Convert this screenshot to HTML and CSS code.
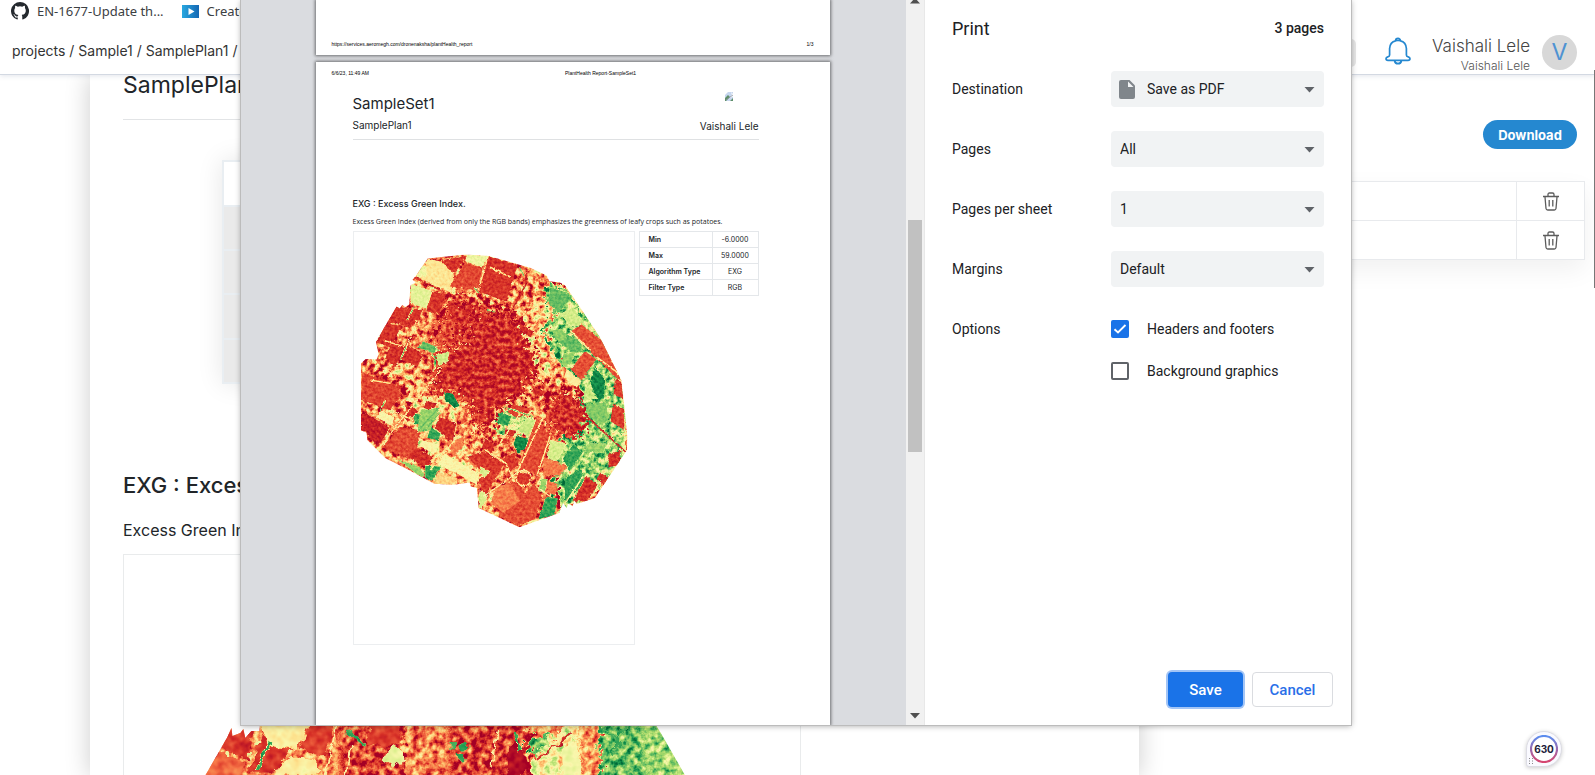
FILE: index.html
```html
<!DOCTYPE html>
<html lang="en">
<head>
<meta charset="utf-8">
<title>PlantHealth Report-SampleSet1</title>
<link rel="stylesheet" href="styles.css">
</head>
<body>
<svg class="defs" width="0" height="0" aria-hidden="true">
  <defs>
    <filter id="mixed" x="0" y="0" width="1" height="1" color-interpolation-filters="sRGB">
      <feTurbulence type="fractalNoise" baseFrequency="0.06" numOctaves="4" seed="4" result="t"/>
      <feColorMatrix in="t" values="1 0 0 0 0 1 0 0 0 0 1 0 0 0 0 0 0 0 0 1" result="n"/>
      <feDisplacementMap in="SourceGraphic" in2="t" scale="60" xChannelSelector="R" yChannelSelector="G" result="d"/>
      <feComposite in="d" in2="n" operator="arithmetic" k2="1" k3="1.15" k4="-0.575"/>
      <feComponentTransfer>
        <feFuncR type="table" tableValues=".647 .843 .957 .992 .996 .98 .851 .651 .4 .102 0"/>
        <feFuncG type="table" tableValues="0 .188 .427 .682 .878 .97 .937 .851 .741 .596 .408"/>
        <feFuncB type="table" tableValues=".149 .153 .263 .38 .545 .68 .545 .416 .388 .314 .216"/>
        <feFuncA type="linear" slope="0" intercept="1"/>
      </feComponentTransfer>
    </filter>
    <filter id="mixed-fine" x="0" y="0" width="1" height="1" color-interpolation-filters="sRGB">
      <feTurbulence type="fractalNoise" baseFrequency="0.15" numOctaves="3" seed="9" result="t"/>
      <feColorMatrix in="t" values="1 0 0 0 0 1 0 0 0 0 1 0 0 0 0 0 0 0 0 1" result="n"/>
      <feDisplacementMap in="SourceGraphic" in2="t" scale="24" xChannelSelector="R" yChannelSelector="G" result="d"/>
      <feComposite in="d" in2="n" operator="arithmetic" k2="1" k3="0.8" k4="-0.4"/>
      <feComponentTransfer>
        <feFuncR type="table" tableValues=".647 .843 .957 .992 .996 .98 .851 .651 .4 .102 0"/>
        <feFuncG type="table" tableValues="0 .188 .427 .682 .878 .97 .937 .851 .741 .596 .408"/>
        <feFuncB type="table" tableValues=".149 .153 .263 .38 .545 .68 .545 .416 .388 .314 .216"/>
        <feFuncA type="linear" slope="0" intercept="1"/>
      </feComponentTransfer>
    </filter>
    <filter id="town" x="0" y="0" width="1" height="1" color-interpolation-filters="sRGB">
      <feTurbulence type="fractalNoise" baseFrequency="0.08" numOctaves="3" seed="11" result="t"/>
      <feColorMatrix in="t" values="1 0 0 0 0 1 0 0 0 0 1 0 0 0 0 0 0 0 0 1" result="n"/>
      <feDisplacementMap in="SourceGraphic" in2="t" scale="110" xChannelSelector="R" yChannelSelector="G" result="d"/>
      <feComposite in="d" in2="n" operator="arithmetic" k2="1" k3="0.5" k4="-0.265"/>
      <feComponentTransfer>
        <feFuncR type="table" tableValues=".68 .843 .957 .992 .996 .98 .851 .651 .4 .102 0"/>
        <feFuncG type="table" tableValues=".03 .188 .427 .682 .878 .97 .937 .851 .741 .596 .408"/>
        <feFuncB type="table" tableValues=".149 .153 .263 .38 .545 .68 .545 .416 .388 .314 .216"/>
      </feComponentTransfer>
      <feComposite in2="d" operator="in"/>
    </filter>
    <filter id="field" x="0" y="0" width="1" height="1" color-interpolation-filters="sRGB">
      <feTurbulence type="fractalNoise" baseFrequency="0.12" numOctaves="2" seed="7" result="t"/>
      <feColorMatrix in="t" values="1 0 0 0 0 1 0 0 0 0 1 0 0 0 0 0 0 0 0 1" result="n"/>
      <feDisplacementMap in="SourceGraphic" in2="t" scale="9" xChannelSelector="R" yChannelSelector="G" result="d"/>
      <feComposite in="d" in2="n" operator="arithmetic" k2="1" k3="0.2" k4="-0.1"/>
      <feComponentTransfer>
        <feFuncR type="table" tableValues=".647 .843 .957 .992 .996 .98 .851 .651 .4 .102 0"/>
        <feFuncG type="table" tableValues="0 .188 .427 .682 .878 .97 .937 .851 .741 .596 .408"/>
        <feFuncB type="table" tableValues=".149 .153 .263 .38 .545 .68 .545 .416 .388 .314 .216"/>
      </feComponentTransfer>
      <feComposite in2="d" operator="in"/>
    </filter>
    <clipPath id="outline"><path d="M232 84 345 72 415 76 540 112 590 135 598 152 630 156 645 164 700 245 750 320 815 450 823 520 833 620 832 660 735 805 690 820 680 822 674 812 668 830 655 822 650 835 640 820 632 838 628 850 508 893 385 835 380 775 362 770 358 758 310 765 252 762 165 715 105 685 50 630 48 608 31 602 31 400 45 386 78 388 84 372 76 335 138 228 148 234 155 224 165 230 176 222 180 165 196 155 186 148 195 138Z"/></clipPath>
    <clipPath id="outline-large"><path d="M204 777 227 737 231 728 232 736 240 733 243 729 245 738 251 731 259 731 260 722 656 722 664 735 688 777Z"/></clipPath>
    <linearGradient id="ring" x1="0" y1="0" x2="0" y2="1"><stop offset="0" stop-color="#5b8def"/><stop offset="1" stop-color="#d6456f"/></linearGradient>
    <linearGradient id="clip-blue"><stop offset="0" stop-color="#29a8e0"/><stop offset="1" stop-color="#1467b3"/></linearGradient>
    <symbol id="trash" viewBox="0 0 16 19"><path d="M0 4.500h16M5 4.500V2.500q0-1.500 1.500-1.500h3q1.500 0 1.500 1.500v2M2 5l1 11.500q.2 1.500 1.700 1.500h6.600q1.500 0 1.700-1.500L14 5M6.200 8v6.500M9.800 8v6.500" fill="none" stroke="#5c5c5c" stroke-width="1.300"/></symbol>
    <symbol id="caret" viewBox="0 0 10 6"><path d="M0 0h10L5 5.500z" fill="#5f6368"/></symbol>
  </defs>
</svg>

<header class="top">
  <nav class="bookmarks" aria-label="Bookmarks">
    <a href="#"><svg width="18" height="18" viewBox="0 0 16 16"><path fill="#24292e" d="M8 0a8 8 0 0 0-2.530 15.590c.4.070.55-.17.55-.38v-1.490c-2.010.37-2.530-.49-2.690-.94-.09-.23-.48-.94-.82-1.130-.28-.15-.68-.52-.01-.53.63-.01 1.080.58 1.230.82.72 1.210 1.870.87 2.330.66.070-.52.280-.87.510-1.070-1.780-.2-3.640-.89-3.640-3.950 0-.87.310-1.590.82-2.150-.08-.2-.36-1.020.08-2.120 0 0 .67-.21 2.200.82a7.600 7.600 0 0 1 4 0c1.530-1.040 2.200-.82 2.200-.82.440 1.100.16 1.920.08 2.120.51.560.82 1.270.82 2.150 0 3.070-1.870 3.750-3.650 3.950.29.250.54.730.54 1.480v2.200c0 .21.150.46.550.38A8 8 0 0 0 8 0"/></svg><span>EN-1677-Update th...</span></a>
    <a href="#"><svg width="17" height="13" viewBox="0 0 17 13"><path fill="url(#clip-blue)" d="M0 0h17v13H0z"/><path fill="#fff" d="M6.500 3l6 3.500-6 3.500z"/></svg><span>Create</span></a>
  </nav>
  <div class="appbar">
    <p class="crumbs">projects / Sample1 / SamplePlan1 / SampleSet1</p>
    <div class="account">
      <span class="chip"></span>
      <svg class="bell" width="26" height="28" viewBox="0 0 26 28" fill="none" stroke="#2588d0" stroke-width="1.700" stroke-linejoin="round"><path d="M4.600 18v-6.500Q5 5 10.600 3.800Q13 3.200 15.400 3.800Q21 5 21.400 11.500V18q0 1.500 1.800 1.800 1.800.4 1.800 1.900 0 1.600-2 1.600H3q-2 0-2-1.600 0-1.500 1.800-1.900Q4.600 19.500 4.600 18zM10.600 3.800a2.400 2.400 0 0 1 4.800 0M9.500 23.500q.5 3.200 3.500 3.200t3.500-3.200"/></svg>
      <div class="who"><span class="name">Vaishali Lele</span><span class="sub">Vaishali Lele</span></div>
      <span class="avatar">V</span>
    </div>
  </div>
</header>

<main class="content">
  <section class="sheet">
    <h1>SamplePlan1</h1>
    <div class="band"><div class="summary"><i></i><i></i><i></i><i></i><i></i></div></div>
    <h2>EXG : Excess Green Index.</h2>
    <p>Excess Green Index (derived from only the RGB bands)</p>
    <div class="bigmap">
      <svg viewBox="123 554 680 222" role="img" aria-label="EXG map">
        <g clip-path="url(#outline-large)">
          <g filter="url(#mixed-fine)">
            <path fill="#404040" d="M190 700h510v90H190z"/>
            <path fill="#202020" d="M340 700h65v90h-65zM450 700h80v90h-80z"/>
            <path fill="#3c3c3c" d="M405 730h45v60h-45z"/>
            <path fill="#c8c8c8" d="M600 700h40l20 90h-80zM530 735h22v18h-22z"/>
            <path fill="#b0b0b0" d="M640 700h40l40 90h-70z"/>
            <path fill="#808080" d="M535 755l45-40 5 75h-60z"/>
            <path fill="#484848" d="M580 720h22v70h-22z"/>
          </g>
          <g filter="url(#field)">
            <path fill="#1c1c1c" d="M227 727l25 0-4 34-20-10-9-6z"/>
            <path fill="#1c1c1c" d="M262 736l31 12-20 25h-26z"/>
            <path fill="#303030" d="M218 750l27 14-5 16h-40z"/>
            <path fill="#747474" d="M258 720h53l-15 30-28-6zM280 764l12-8 20 4 10 10-10 6h-38z"/>
            <path fill="#1f1f1f" d="M312 720h24l-12 37-25-8zM375 720h25v24l-16 4-18-6z"/>
            <path fill="#8c8c8c" d="M387 750l12-5 6 16-10 6-12-6z"/>
            <path fill="#858585" d="M562 748l14-8 8 30-4 10h-16z"/>
            <path fill="#060606" d="M510 748l8-10 8 18 4 10-12 14h-10z"/>
            <path fill="none" stroke="#ddd" stroke-width="3" d="M271 740l-14 30M346 730l20 16M516 731l5 20M606 728l18 18M612 756l12-26 16-10"/>
            <path fill="none" stroke="#777" stroke-width="2" d="M338 722l-14 56M352 745l-6 30M500 728l-8 40"/>
            <path fill="none" stroke="#181818" stroke-width="2" d="M538 760l34-26"/>
            <path fill="#e0e0e0" d="M450 742h6v9h-6zM458 745l8-3 5 6-8 4zM456 754l8 0 2 8-4-1z"/>
            <path fill="#888" d="M225 752h4v4h-4zM248 752h5v5h-5zM255 742h5v4h-5z"/>
          </g>
        </g>
      </svg>
    </div>
  </section>
  <aside class="side">
    <button class="download" type="button">Download</button>
    <table class="reports">
      <tr><td></td><td><button type="button" aria-label="Delete"><svg width="16" height="19"><use href="#trash"/></svg></button></td></tr>
      <tr><td></td><td><button type="button" aria-label="Delete"><svg width="16" height="19"><use href="#trash"/></svg></button></td></tr>
    </table>
  </aside>
</main>
<span class="page-scroll"></span>

<div class="counter">
  <svg width="28" height="28" viewBox="0 0 28 28"><circle cx="14" cy="14" r="13" fill="#fff" stroke="url(#ring)" stroke-width="2.200"/></svg>
  <b>630</b>
  <svg class="grip" width="4" height="6" viewBox="0 0 4 6"><path d="M0 0h1v1H0zM3 0h1v1H3zM0 2.500h1v1H0zM3 2.500h1v1H3zM0 5h1v1H0zM3 5h1v1H3z" fill="#888"/></svg>
</div>

<div class="dialog" role="dialog" aria-label="Print">
  <div class="preview">
    <div class="paper first"><div class="running"><span>https://services.aeromegh.com/dronenaksha/plantHealth_report</span><span>1/3</span></div></div>
    <div class="paper second">
      <div class="running titled"><span>6/6/23, 11:49 AM</span><span>PlantHealth Report-SampleSet1</span></div>
      <div class="report">
        <div class="report-head">
          <div><h3>SampleSet1</h3><p>SamplePlan1</p></div>
          <div class="owner">
            <svg width="9" height="9" viewBox="0 0 9 9"><path d="M3 0h5v9H0V3z" fill="#c6d6ee"/><path d="M0 9V6l3-3 2 2-4 4zM5 9l3-3v3z" fill="#5f8f6a"/><path d="M6 0l3 3v1L5 6l2-3z" fill="#fff"/><path d="M1 8l7-5" stroke="#8a929c" stroke-width=".8"/></svg>
            <p>Vaishali Lele</p>
          </div>
        </div>
        <h4>EXG : Excess Green Index.</h4>
        <p class="about">Excess Green Index (derived from only the RGB bands) emphasizes the greenness of leafy crops such as potatoes.</p>
        <div class="figure">
          <div class="mapbox">
            <svg viewBox="10 4 843 1239" role="img" aria-label="EXG map">
              <g clip-path="url(#outline)">
                <g filter="url(#mixed)">
                  <path fill="#404040" d="M0 50h860v860H0z"/>
                  <path fill="#1c1c1c" d="M290 190l110 10 80 40 20 60-200 50-70-30z"/>
                  <path fill="#b4b4b4" d="M590 165h60l120 180 60 160-10 200-100 90-90 60-30-170 40-60 60-80-20-100-90-90-20-80z"/>
                  <path fill="#5c5c5c" d="M560 180l60 60-40 60 60 120-60 40-80-160z"/>
                  <path fill="#5c5c5c" d="M180 460l160 60-20 100-100 20-60-60zM240 640l200 20-20 100-180 0z"/>
                  <path fill="#999" d="M250 360l60 0-10 50-50 10zM450 540l110 20-30 60-90-10z"/>
                  <path fill="#555" d="M170 380l50 0-20 70-100-20z"/>
                  <path fill="#282828" d="M60 400l100 60 20 60-120-20zM560 440l70 20 60 80-80 20-60-50z"/>
                </g>
                <g filter="url(#town)">
                  <path fill="#1a1a1a" d="M410 240l90 20 50 110 10 60-60 70-60 40-20 50-30 20-40-90-80-50-20-90 90-40 30-60z"/>
                  <path fill="#1c1c1c" d="M640 480l65 40 10 80-50 30-70-30-10-50zM230 440l70-30 30 70-90 10zM290 210l80 10 0 70-80 10z"/>
                  <path fill="#2a2a2a" d="M255 270l60 0 20 60-70 40z"/>
                </g>
                <g filter="url(#field)">
                  <path fill="#6c6c6c" d="M232 84l38 8 42 44-10 52-100-48z"/>
                  <path fill="#888" d="M350 72l66 4-20 36-52-20zM204 92l24 20 0 24-30 4z"/>
                  <path fill="#909090" d="M182 160l72 25-25 50-50-16z"/>
                  <path fill="#1b1b1b" d="M265 90l85-14-38 54zM415 77l88 26-35 110-85-30zM245 185l42 6-20 60-40-8zM138 228l78 10-14 40-34 10-60-16z"/>
                  <path fill="#242424" d="M345 94l53 20-18 66-82-12z"/>
                  <path fill="#1a1a1a" d="M76 335l28-56 50 8-24 44 38 16-34 64-30-26 14-34zM168 342l52 30-20 38-48-22z"/>
                  <path fill="#ccc" d="M218 332l42 18-8 20-50-18zM600 170l58 18 4 20-38 40-30-30zM620 295l76 40 0 25-26 10-66-50z"/>
                  <path fill="#bbb" d="M640 370l38-6-16 40-28 4zM605 300l30-6 20 30-30 10z"/>
                  <path fill="#9c9c9c" d="M630 250l40-20 36 50-40 12zM258 372l40-8-6 32-30 10z"/>
                  <path fill="#272727" d="M695 282l64 50 57 120-16-8-140-140zM705 362l35 25-44 64-34-34z"/>
                  <path fill="#eee" d="M736 408l30 40-2 56-22 10-22-60 8-30zM281 486l26 4 22 38-16 6-30-24zM498 618l38 8-4 26-30 20-12-30z"/>
                  <path fill="#a0a0a0" d="M712 456l32 50-44 4zM525 565l36 6-26 50-32-18z"/>
                  <path fill="#c0c0c0" d="M710 520l60-4 8 60-30 10-40-36z"/>
                  <path fill="#737373" d="M650 415l46 38-16 20-38-30z"/>
                  <path fill="#222" d="M35 425l106 40 8 34-32 42-86-32z"/>
                  <path fill="#202020" d="M795 445l20 10 6 50-30-10zM790 520l34 20-2 60-40-26zM488 520l56 20-42 26-30-20z"/>
                  <path fill="#111" d="M50 552l68 42-36 58-36-44-15-6v-50z"/>
                  <path fill="#252525" d="M148 590l60 10-8 52-22 36-84-36z"/>
                  <path fill="#181818" d="M180 525l24 20-34 28-12-14zM268 560l50 20-10 54-56-40zM195 655l50 25-14 36-58-34zM465 598l34 4-10 18-26-6zM405 625l30 20-14 40-26-32zM228 512l30 8-10 24-28-10zM448 622l30 8-4 12-30-4zM550 470l34 14-8 16-30-14zM512 280l38 24-8 18-36-24z"/>
                  <path fill="#3a3a3a" d="M290 640l50-20 0 30-30 30zM350 690l30-10 20 20-24 16z"/>
                  <path fill="#252525" d="M560 565l48 60-14 40-28 70-64-16z"/>
                  <path fill="#1d1d1d" d="M350 680l50-16 62 38-58 96-20-50 26-10-34-30zM465 680l30-12 10 36-24 20-30-24zM500 728l40 4-4 36-34 0z"/>
                  <path fill="#262626" d="M500 740l24 54 28-34 24 44-20 64-54 21-56-30 10-60z"/>
                  <path fill="#3a3a3a" d="M440 770l40-10 30 54-50 36-40-30z"/>
                  <path fill="#999" d="M388 780l26 18-20 40-10-6zM600 630l50 10-30 60-30-20zM390 710l30 14-16 18-16-14z"/>
                  <path fill="#7c7c7c" d="M280 670l108 62-8 34-70-40-50-20zM214 630l56 14-18 28-44-20zM92 542l40 20-8 28-48-30z"/>
                  <path fill="#606060" d="M262 726l60 20-20 20-50-4z"/>
                  <path fill="#ddd" d="M450 545l34 14-10 30-34-10zM188 560l12-10 20 10-10 20-16 4zM224 706l50 4-30 44-20-10zM588 800l36 6-10 50-50 14zM672 640l26 30-40 56-20-40zM645 745l50-30 10 50-60 50zM240 590l30 20-4 24-36-10z"/>
                  <path fill="#b8b8b8" d="M136 686l70 24 20 30-16 2zM210 540l60-8-30 70-40 6zM574 748l20 0-10 44-20-10zM720 640l50 0-10 30-60-4z"/>
                  <path fill="#191919" d="M710 738l34 26-34 50-42 2zM752 728l24 16-12 22-24-18zM776 672l40-10-8 44-32 6z"/>
                  <path fill="#383838" d="M580 680l76 30-30 30-46 0zM590 755l34 8-8 34-26-10z"/>
                  <path fill="none" stroke="#777" stroke-width="4" d="M85 655L270 420M240 720l90-110M500 730l80-170M180 140l150 50M740 380l80 60M400 800l100-70M405 660l60 38 30 60M450 640l60-90M160 370l40-100M120 460l-60-10M420 110l60 30M600 620l-40 120M270 92l40 40M384 180l30-104M120 540l70 30M700 740l-60 90M660 300l60 60M560 770l40 30M100 330l60 20"/>
                  <circle cx="521" cy="745" r="23" fill="none" stroke="#777" stroke-width="4"/>
                  <path fill="none" stroke="#151515" stroke-width="5" d="M690 540l140 128M530 115l-4 50-50 90M190 140l90 44"/>
                  <path fill="none" stroke="#ccc" stroke-width="4" d="M205 600l60-66M220 606l50-60M190 230l-20 40M150 390l16-40M104 510l-16 34M550 560l-90-30M370 170l16 18M410 240l28 6M508 110l14 26"/>
                </g>
              </g>
            </svg>
          </div>
          <table class="stats">
            <tr><th scope="row">Min</th><td>-6.0000</td></tr>
            <tr><th scope="row">Max</th><td>59.0000</td></tr>
            <tr><th scope="row">Algorithm Type</th><td>EXG</td></tr>
            <tr><th scope="row">Filter Type</th><td>RGB</td></tr>
          </table>
        </div>
      </div>
    </div>
  </div>
  <div class="scrollbar"><svg width="10" height="6" viewBox="0 0 10 6"><path d="M0 5.500h10L5 0z" fill="#505050"/></svg><span class="thumb"></span><svg width="10" height="6" viewBox="0 0 10 6"><path d="M0 0h10L5 5.500z" fill="#505050"/></svg></div>
  <form class="panel">
    <div class="panel-head"><h2>Print</h2><span>3 pages</span></div>
    <div class="row"><label for="dest">Destination</label><div class="pick with-icon"><select id="dest"><option>Save as PDF</option></select><svg class="doc" width="16" height="19" viewBox="0 0 16 19"><path d="M2 0h8.500L16 5.500V17q0 2-2 2H2q-2 0-2-2V2q0-2 2-2" fill="#80868b"/><path d="M9 1.500v5.500h5.500z" fill="#f1f3f4"/></svg><svg class="caret"><use href="#caret"/></svg></div></div>
    <div class="row"><label for="pages">Pages</label><div class="pick"><select id="pages"><option>All</option></select><svg class="caret"><use href="#caret"/></svg></div></div>
    <div class="row"><label for="per">Pages per sheet</label><div class="pick"><select id="per"><option>1</option></select><svg class="caret"><use href="#caret"/></svg></div></div>
    <div class="row"><label for="margins">Margins</label><div class="pick"><select id="margins"><option>Default</option></select><svg class="caret"><use href="#caret"/></svg></div></div>
    <div class="row options"><span>Options</span>
      <div class="checks">
        <label><input type="checkbox" checked><span>Headers and footers</span></label>
        <label><input type="checkbox"><span>Background graphics</span></label>
      </div>
    </div>
    <div class="actions"><button class="save" type="button">Save</button><button class="cancel" type="button">Cancel</button></div>
  </form>
</div>
</body>
</html>
```

FILE: styles.css
```css
* { box-sizing: border-box; }
body {
  margin: 0;
  position: relative;
  height: 100vh;
  overflow: hidden;
  background: #fff;
  color: #212529;
  font-family: Inter, "Open Sans", sans-serif;
}
h1, h2, h3, h4, p { margin: 0; font-weight: 400; }
button, select { font: inherit; }
svg { display: block; }
.defs { position: absolute; }

.top {
  position: relative;
  height: 75px;
  background: #fff;
  border-bottom: 1px solid #d3d9e2;
  box-shadow: 0 1px 5px rgba(60, 80, 120, .15);
}
.bookmarks {
  display: flex;
  gap: 18px;
  height: 22px;
  padding-left: 11px;
  font: 13px/20px "Noto Sans", sans-serif;
}
.bookmarks a {
  display: flex;
  align-items: center;
  gap: 8px;
  color: #3c4043;
  text-decoration: none;
}
.appbar { display: flex; justify-content: space-between; height: 52px; padding: 0 18px 0 12px; }
.crumbs { font-size: 14px; line-height: 58px; color: #333; }
.account { display: flex; align-items: center; padding-top: 9px; }
.chip { width: 26px; height: 28px; margin-right: 29px; border-radius: 5px; background: #e6e6e6; }
.bell { margin: 0 21px 3px 0; }
.who { display: flex; flex-direction: column; align-items: flex-end; margin-right: 12px; padding-top: 4px; font-weight: 300; color: #444; }
.name { font-size: 17px; line-height: 22px; }
.sub { font-size: 12px; line-height: 18px; color: #555; }
.avatar { width: 35px; height: 35px; border-radius: 50%; background: #d8d8d8; color: #4e92d2; font-size: 23px; line-height: 35px; text-align: center; }

.content { display: grid; grid-template-columns: 1fr 456px; height: calc(100vh - 75px); padding-left: 90px; }
.sheet { padding: 0 33px; background: #fff; box-shadow: 0 0 24px rgba(0, 0, 0, .2); }
.sheet h1 { height: 45px; border-bottom: 1px solid #e2e4e6; font-size: 23px; line-height: 20px; }
.band { padding: 40px 99px 0; }
.summary { display: grid; grid-template-rows: 43px 42px 42px 43px 42px; gap: 2px; padding: 2px; background: #e9eef2; box-shadow: 0 0 24px rgba(0, 0, 0, .1); }
.summary i { background: #eaeaea; }
.summary i:first-child { background: #fff; }
.sheet h2 { margin-top: 85px; font-size: 22px; font-weight: 500; line-height: 32px; }
.sheet p { margin-top: 17px; font-size: 16px; line-height: 24px; }
.bigmap { width: 69%; margin-top: 12px; border: 1px solid #e9ebec; }
.bigmap svg { width: 100%; }

.side { padding: 45px 10px 0 0; }
.download { display: block; margin: 0 8px 32px auto; width: 94px; height: 29px; padding: 0; border: 0; border-radius: 15px; background: #2588d0; color: #fff; font-size: 13px; font-weight: 700; }
.reports { width: 100%; border-collapse: collapse; box-shadow: 0 10px 24px rgba(0, 0, 0, .06); }
.reports td { height: 39px; padding: 0; border: 1px solid #e8eaed; background: #fff; }
.reports td:last-child { width: 68px; }
.reports button { display: block; margin: 0 auto; padding: 0; border: 0; background: none; }
.page-scroll { position: absolute; right: 0; top: 70px; width: 1px; height: 218px; background: #777; }

.counter {
  position: absolute;
  right: 33px;
  bottom: 8px;
  width: 36px;
  height: 36px;
  padding: 4px;
  border: 1px solid #dcdce4;
  border-radius: 50% 50% 50% 3px;
  background: #fafaff;
  box-shadow: 0 1px 4px rgba(0, 0, 0, .2);
}
.counter svg { margin: -1px; }
.counter b { position: absolute; inset: 0; font-size: 10px; line-height: 34px; text-align: center; color: #1c1c3a; }
.counter .grip { position: absolute; left: 2px; bottom: 2px; margin: 0; }

.dialog {
  position: absolute;
  inset: 0 244px 50px 241px;
  display: flex;
  background: #fff;
  box-shadow: 0 0 0 1px #bcbcbc, 0 1px 6px rgba(0, 0, 0, .35);
}
.preview { flex: 1; display: flex; flex-direction: column; align-items: center; gap: 7px; padding-right: 2px; overflow: hidden; background: #dadce0; }
.paper { width: 514px; background: #fff; box-shadow: 0 0 3px 1px rgba(0, 0, 0, .5); }
.first { flex: none; height: 55px; padding-top: 39px; }
.second { flex: 1; padding-top: 6px; }
.running { display: flex; justify-content: space-between; padding: 0 16px; font: 5px/10px "Liberation Sans", sans-serif; color: #000; }
.titled { justify-content: flex-start; gap: 196px; }
.report { padding: 13px 71px 0 37px; }
.report-head { display: flex; justify-content: space-between; height: 49px; border-bottom: 1px solid #dfe1e3; }
.report h3 { padding-top: 4px; font-size: 15px; line-height: 18px; }
.report-head p { font-size: 10px; line-height: 12px; }
.report-head h3 + p { margin-top: 6px; }
.owner { display: flex; flex-direction: column; align-items: center; }
.owner svg { margin: 1px 0 19px; }
.report h4 { margin-top: 57px; font-size: 9px; font-weight: 500; line-height: 14px; }
.about { margin-top: 4px; font: 7px/14px "Open Sans", sans-serif; white-space: nowrap; }
.figure { display: flex; align-items: flex-start; justify-content: space-between; margin-top: 2px; }
.mapbox { width: 282px; border: 1px solid #eceef0; }
.mapbox svg { width: 100%; }
.stats { width: 120px; border-collapse: collapse; font-size: 7px; line-height: 15px; }
.stats th, .stats td { padding: 0; border: 1px solid #e4e7ea; }
.stats th { padding-left: 9px; text-align: left; font-weight: 600; }
.stats td { width: 46px; text-align: center; }

.scrollbar { width: 19px; display: flex; flex-direction: column; align-items: center; padding-bottom: 6px; border-right: 1px solid #e8e8e8; background: #f1f1f1; }
.scrollbar svg:first-child { margin-top: -2px; }
.thumb { width: 14px; height: 232px; margin: 216px 0 auto; background: #c1c1c1; }

.panel { display: flex; flex-direction: column; width: 426px; padding: 13px 27px 0; font-family: Roboto, sans-serif; font-size: 14px; color: #202124; }
.panel-head { display: flex; align-items: center; justify-content: space-between; height: 30px; margin-bottom: 28px; font-weight: 500; }
.panel-head h2 { font-size: 18px; }
.row { display: flex; align-items: center; justify-content: space-between; height: 36px; margin-bottom: 24px; }
.pick { position: relative; width: 213px; }
.pick select { width: 100%; height: 36px; padding: 0 30px 0 9px; border: 0; border-radius: 4px; background: #f1f3f4; color: #202124; appearance: none; }
.with-icon select { padding-left: 36px; }
.doc { position: absolute; left: 8px; top: 9px; }
.caret { position: absolute; right: 9px; top: 16px; width: 11px; height: 6px; }
.options { align-items: flex-start; height: auto; line-height: 18px; padding-top: 9px; }
.checks { display: grid; gap: 24px; width: 213px; }
.checks label { display: flex; align-items: center; gap: 18px; }
.checks input { appearance: none; width: 18px; height: 18px; margin: 0; border: 2px solid #5f6368; border-radius: 2px; }
.checks input:checked { border: 0; background: #1a73e8 url("data:image/svg+xml,%3Csvg xmlns='http://www.w3.org/2000/svg' viewBox='0 0 18 18'%3E%3Cpath d='M3.500 9.300l3.500 3.200 7.500-7.500' fill='none' stroke='white' stroke-width='1.900'/%3E%3C/svg%3E"); }
.actions { display: flex; justify-content: flex-end; gap: 9px; margin: auto -9px 18px 0; }
.actions button { height: 35px; padding: 0; border-radius: 4px; font-size: 15px; font-weight: 500; }
.save { width: 75px; border: 0; background: #1a73e8; color: #fff; box-shadow: 0 0 0 2px #a3c5f6; }
.cancel { width: 81px; border: 1px solid #dadce0; background: #fff; color: #2a6fe8; }
```
